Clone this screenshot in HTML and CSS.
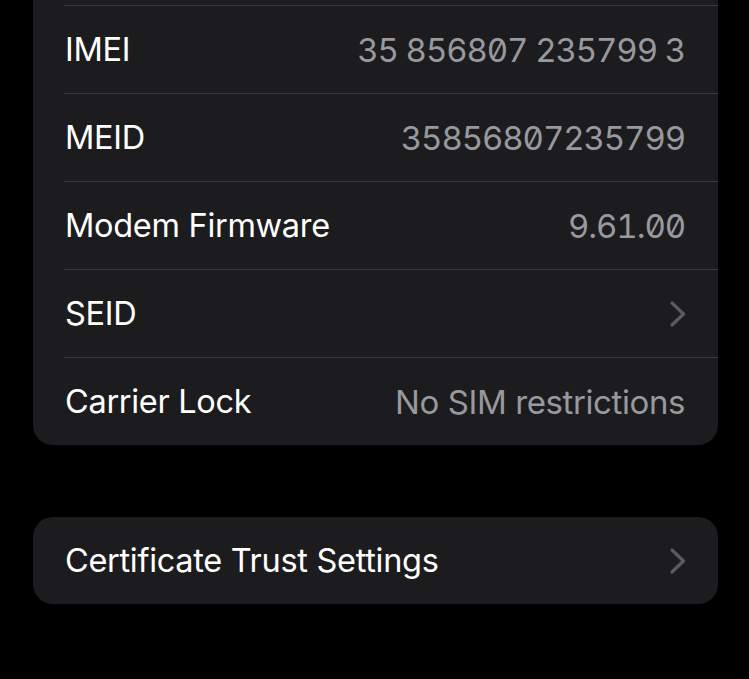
FILE: index.html
```html
<!DOCTYPE html>
<html lang="en">
<head>
    <meta charset="UTF-8">
    <meta name="viewport" content="width=device-width, initial-scale=1.0">
    <title>About</title>
    <link rel="stylesheet" href="styles.css">
</head>
<body>
    <div class="page">
        <!-- gruppo dati modem, la parte alta è fuori schermo -->
        <div class="group cut">
            <div class="row">
                <span class="label">IMEI</span>
                <span class="value">35 856807 235799 3</span>
            </div>
            <div class="row">
                <span class="label">MEID</span>
                <span class="value">35856807235799</span>
            </div>
            <div class="row">
                <span class="label">Modem Firmware</span>
                <span class="value">9.61.00</span>
            </div>
            <div class="row">
                <span class="label">SEID</span>
                <svg class="chevron" viewBox="0 0 17 26" width="17" height="26">
                    <path d="M3 2 L14.5 13 L3 24" />
                </svg>
            </div>
            <div class="row">
                <span class="label">Carrier Lock</span>
                <span class="value text">No SIM restrictions</span>
            </div>
        </div>

        <div class="group">
            <div class="row">
                <span class="label">Certificate Trust Settings</span>
                <svg class="chevron" viewBox="0 0 17 26" width="17" height="26">
                    <path d="M3 2 L14.5 13 L3 24" />
                </svg>
            </div>
        </div>
    </div>
</body>
</html>
```

FILE: styles.css
```css
/* Sfondo nero stile iOS dark */
body {
    background-color: #000;
    color: #fff;
    font-family: Inter, "Noto Sans", sans-serif;
    margin: 0;
    padding: 0;
}

.page {
    display: flex;
    flex-direction: column;
    gap: 72px;
    padding: 0 31px 0 33px;
}

/* Gruppo a bordi arrotondati */
.group {
    background-color: #1c1c1e;
    border-radius: 20px;
    overflow: hidden;
}

/* Il primo gruppo è tagliato in alto */
.group.cut {
    border-top-left-radius: 0;
    border-top-right-radius: 0;
    padding-top: 5px;
}

.row {
    display: flex;
    align-items: center;
    justify-content: space-between;
    height: 87px;
    margin-left: 31px;
    padding: 0 33px 0 1px;
    border-top: 1px solid #38383a;
}

.group:not(.cut) .row {
    border-top: none;
}

.label {
    font-size: 32.5px;
    letter-spacing: -0.3px;
}

/* Valori grigi con cifre monospaziate */
.value {
    color: #98989f;
    font-size: 33px;
    font-feature-settings: "tnum" 1, "zero" 1;
    letter-spacing: -1.1px;
}

.value.text {
    font-feature-settings: normal;
    letter-spacing: -0.4px;
}

.chevron {
    margin-right: -1px;
}

.chevron path {
    fill: none;
    stroke: #5a5a5f;
    stroke-width: 3.2;
    stroke-linecap: round;
    stroke-linejoin: round;
}
```
